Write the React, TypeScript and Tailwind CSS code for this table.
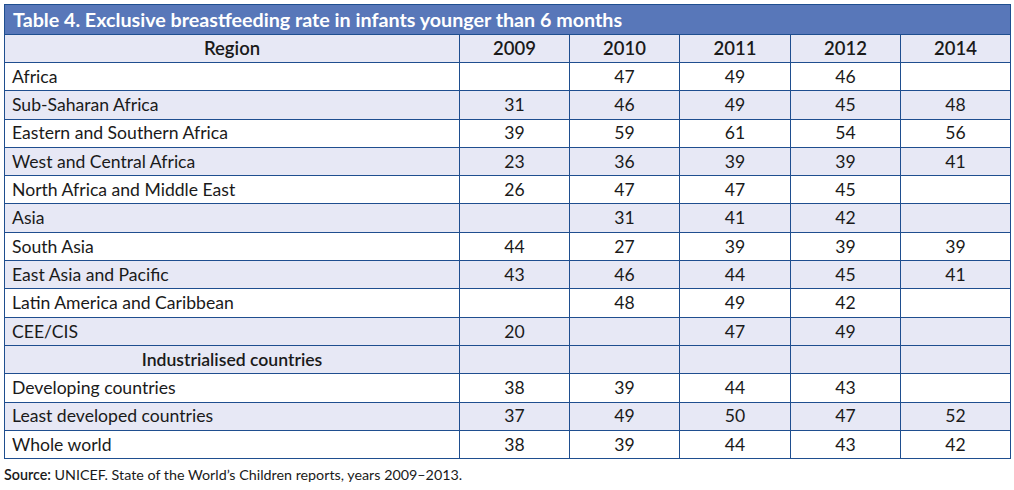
import React from "react";

const rows: { name: string; vals: string[]; shaded: boolean; bold?: boolean }[] = [
  { name: "Africa", vals: ["", "47", "49", "46", ""], shaded: false },
  { name: "Sub-Saharan Africa", vals: ["31", "46", "49", "45", "48"], shaded: true },
  { name: "Eastern and Southern Africa", vals: ["39", "59", "61", "54", "56"], shaded: false },
  { name: "West and Central Africa", vals: ["23", "36", "39", "39", "41"], shaded: true },
  { name: "North Africa and Middle East", vals: ["26", "47", "47", "45", ""], shaded: false },
  { name: "Asia", vals: ["", "31", "41", "42", ""], shaded: true },
  { name: "South Asia", vals: ["44", "27", "39", "39", "39"], shaded: false },
  { name: "East Asia and Pacific", vals: ["43", "46", "44", "45", "41"], shaded: true },
  { name: "Latin America and Caribbean", vals: ["", "48", "49", "42", ""], shaded: false },
  { name: "CEE/CIS", vals: ["20", "", "47", "49", ""], shaded: true },
  { name: "Industrialised countries", vals: ["", "", "", "", ""], shaded: true, bold: true },
  { name: "Developing countries", vals: ["38", "39", "44", "43", ""], shaded: false },
  { name: "Least developed countries", vals: ["37", "49", "50", "47", "52"], shaded: true },
  { name: "Whole world", vals: ["38", "39", "44", "43", "42"], shaded: false },
];

const years = ["2009", "2010", "2011", "2012", "2014"];

export default function App() {
  return (
    <div className="w-[1014px] h-[490px] bg-white pt-[4px] pl-[4px] text-[#1a1a1a]" style={{ fontFamily: "Lato, 'Open Sans', sans-serif" }}>
      <table className="border-collapse w-[1006px] table-fixed border border-[#1f4e8f]">
        <colgroup>
          <col className="w-[455px]" />
          <col className="w-[110px]" />
          <col className="w-[110px]" />
          <col className="w-[111px]" />
          <col className="w-[110px]" />
          <col className="w-[110px]" />
        </colgroup>
        <thead>
          <tr className="h-[30px]">
            <th colSpan={6} className="bg-[#5877b9] text-white text-left font-bold text-[19.7px] px-[8px] border border-[#1f4e8f] leading-none">
              Table 4. Exclusive breastfeeding rate in infants younger than 6 months
            </th>
          </tr>
          <tr className="h-[28px] bg-[#e7e8f5]">
            <th className="border border-[#1f4e8f] font-semibold text-[18.5px] leading-none">Region</th>
            {years.map((y) => (
              <th key={y} className="border border-[#1f4e8f] font-semibold text-[18.5px] leading-none">{y}</th>
            ))}
          </tr>
        </thead>
        <tbody>
          {rows.map((r) => (
            <tr key={r.name} className={`h-[28.3px] ${r.shaded ? "bg-[#e7e8f5]" : "bg-white"}`}>
              <td
                className={`border border-[#1f4e8f] text-[17.6px] leading-none ${r.bold ? "font-semibold text-center" : "px-[7px]"}`}
              >
                {r.name}
              </td>
              {r.vals.map((v, i) => (
                <td key={i} className="border border-[#1f4e8f] text-center text-[17.6px] leading-none">{v}</td>
              ))}
            </tr>
          ))}
        </tbody>
      </table>
      <div className="mt-[9px] text-[14.3px] leading-none">
        <span className="font-semibold">Source:</span> UNICEF. State of the World’s Children reports, years 2009–2013.
      </div>
    </div>
  );
}
